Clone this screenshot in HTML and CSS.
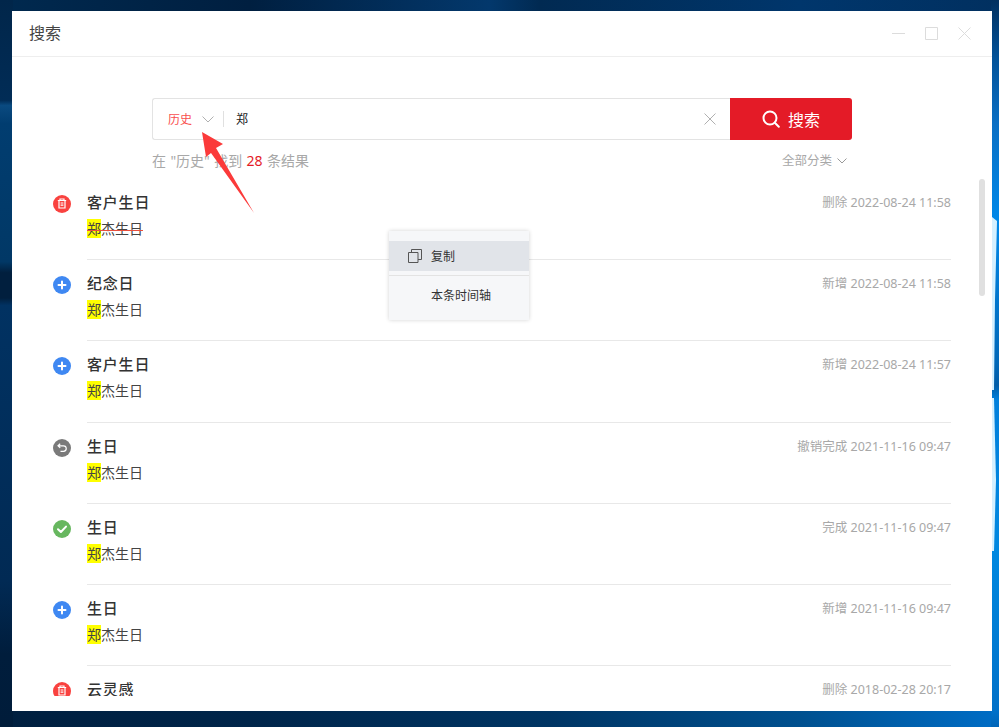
FILE: index.html
```html
<!DOCTYPE html>
<html lang="zh-CN">
<head>
<meta charset="utf-8">
<title>搜索</title>
<link rel="stylesheet" href="styles.css">
</head>
<body>
<svg class="wallpaper" width="999" height="727" viewBox="0 0 999 727" aria-hidden="true">
  <defs>
    <linearGradient id="gTop"><stop offset="0" stop-color="#00294f"/><stop offset=".25" stop-color="#001f40"/><stop offset=".49" stop-color="#03386c"/><stop offset=".54" stop-color="#012a52"/><stop offset=".8" stop-color="#00366c"/><stop offset="1" stop-color="#013060"/></linearGradient>
    <linearGradient id="gBottom"><stop offset="0" stop-color="#001f3f"/><stop offset=".25" stop-color="#00254a"/><stop offset=".55" stop-color="#003564"/><stop offset=".8" stop-color="#00508f"/><stop offset="1" stop-color="#006dc6"/></linearGradient>
    <linearGradient id="gLeft" x2="0" y2="1"><stop offset="0" stop-color="#01264a"/><stop offset=".138" stop-color="#012c56"/><stop offset=".145" stop-color="#0a4a80"/><stop offset=".17" stop-color="#013d70"/><stop offset=".36" stop-color="#013866"/><stop offset=".375" stop-color="#011f3e"/><stop offset=".41" stop-color="#011f3e"/><stop offset=".42" stop-color="#013262"/><stop offset=".8" stop-color="#012a54"/><stop offset=".9" stop-color="#001d3c"/><stop offset="1" stop-color="#001c3a"/></linearGradient>
    <linearGradient id="gRight" x2="0" y2="1"><stop offset="0" stop-color="#01305f"/><stop offset=".08" stop-color="#025299"/><stop offset=".17" stop-color="#0a6fc4"/><stop offset=".3" stop-color="#0088e8"/><stop offset=".5" stop-color="#0068b8"/><stop offset=".53" stop-color="#005da8"/><stop offset=".55" stop-color="#0080dc"/><stop offset=".76" stop-color="#0088e0"/><stop offset=".98" stop-color="#0070c8"/><stop offset="1" stop-color="#0065b8"/></linearGradient>
  </defs>
  <rect x="0" y="0" width="999" height="12" fill="url(#gTop)"/>
  <rect x="0" y="710" width="999" height="17" fill="url(#gBottom)"/>
  <rect x="0" y="0" width="13" height="727" fill="url(#gLeft)"/>
  <rect x="991" y="0" width="8" height="727" fill="url(#gRight)"/>
  <polygon points="992,217 997,221 995,300 994,390 992,390" fill="#d4f0ff"/>
  <polygon points="992,398 994,398 996,480 994,551 992,551" fill="#d4f0ff"/>
</svg>

<main class="window">
  <header class="titlebar">
    <h1 class="title">搜索</h1>
    <div class="controls">
      <svg class="ctl" width="13" height="13" viewBox="0 0 13 13"><path d="M0 6.500h13"/></svg>
      <svg class="ctl" width="13" height="13" viewBox="0 0 13 13"><path d="M.5.5h12v12H.5z"/></svg>
      <svg class="ctl" width="13" height="13" viewBox="0 0 13 13"><path d="M.5.5l12 12M12.500.5L.5 12.500"/></svg>
    </div>
  </header>

  <section class="search">
    <div class="search-form">
      <div class="field">
        <span class="scope">历史</span>
        <svg class="chev" width="12" height="7" viewBox="0 0 12 7"><path d="M.5.5L6 6 11.500.5"/></svg>
        <span class="sep"></span>
        <span class="query">郑</span>
        <svg class="clear" width="12" height="12" viewBox="0 0 12 12"><path d="M.5.5l11 11M11.500.5l-11 11"/></svg>
      </div>
      <button class="go" type="button">
        <svg width="18" height="18" viewBox="0 0 18 18"><circle cx="8" cy="8" r="6.500"/><path d="M12.800 12.800L16.800 16.800"/></svg>
        <span>搜索</span>
      </button>
    </div>
    <div class="summary">
      <span class="found">在 "历史" 找到 <em class="count">28</em> 条结果</span>
      <span class="filter">全部分类
        <svg width="10" height="6" viewBox="0 0 10 6"><path d="M.5.500L5 5 9.500.5"/></svg>
      </span>
    </div>
  </section>

  <section class="list">
    <article class="row">
      <svg class="badge" width="18" height="18" viewBox="0 0 18 18"><circle cx="9" cy="9" r="9" fill="#f9423f"/><path class="glyph thin" d="M4.800 5.500h8.400M7 5.300V4h4v1.300M6 5.800v7.200h6V5.800"/><path class="glyph thin" d="M7.600 8h2.800M7.600 10.200h2.800"/></svg>
      <div class="body">
        <div class="head"><h2 class="name">客户生日</h2><span class="meta">删除 2022-08-24 11:58</span></div>
        <p class="text struck"><mark class="hit">郑</mark>杰生日</p>
      </div>
    </article>
    <article class="row">
      <svg class="badge" width="18" height="18" viewBox="0 0 18 18"><circle cx="9" cy="9" r="9" fill="#3f88f2"/><path class="glyph" d="M9 5.500v7M5.500 9h7"/></svg>
      <div class="body">
        <div class="head"><h2 class="name">纪念日</h2><span class="meta">新增 2022-08-24 11:58</span></div>
        <p class="text"><mark class="hit">郑</mark>杰生日</p>
      </div>
    </article>
    <article class="row">
      <svg class="badge" width="18" height="18" viewBox="0 0 18 18"><circle cx="9" cy="9" r="9" fill="#3f88f2"/><path class="glyph" d="M9 5.500v7M5.500 9h7"/></svg>
      <div class="body">
        <div class="head"><h2 class="name">客户生日</h2><span class="meta">新增 2022-08-24 11:57</span></div>
        <p class="text"><mark class="hit">郑</mark>杰生日</p>
      </div>
    </article>
    <article class="row">
      <svg class="badge" width="18" height="18" viewBox="0 0 18 18"><circle cx="9" cy="9" r="9" fill="#7a7a7a"/><path class="glyph thin" d="M7.200 4.700L5 6.800l2.200 2.100M5.200 6.800h5.300a2.700 2.700 0 0 1 0 5.500H7.500"/></svg>
      <div class="body">
        <div class="head"><h2 class="name">生日</h2><span class="meta">撤销完成 2021-11-16 09:47</span></div>
        <p class="text"><mark class="hit">郑</mark>杰生日</p>
      </div>
    </article>
    <article class="row">
      <svg class="badge" width="18" height="18" viewBox="0 0 18 18"><circle cx="9" cy="9" r="9" fill="#67b75f"/><path class="glyph" d="M5 9.200l2.900 2.800L13 6.600"/></svg>
      <div class="body">
        <div class="head"><h2 class="name">生日</h2><span class="meta">完成 2021-11-16 09:47</span></div>
        <p class="text"><mark class="hit">郑</mark>杰生日</p>
      </div>
    </article>
    <article class="row">
      <svg class="badge" width="18" height="18" viewBox="0 0 18 18"><circle cx="9" cy="9" r="9" fill="#3f88f2"/><path class="glyph" d="M9 5.500v7M5.500 9h7"/></svg>
      <div class="body">
        <div class="head"><h2 class="name">生日</h2><span class="meta">新增 2021-11-16 09:47</span></div>
        <p class="text"><mark class="hit">郑</mark>杰生日</p>
      </div>
    </article>
    <article class="row">
      <svg class="badge" width="18" height="18" viewBox="0 0 18 18"><circle cx="9" cy="9" r="9" fill="#f9423f"/><path class="glyph thin" d="M4.800 5.500h8.400M7 5.300V4h4v1.300M6 5.800v7.200h6V5.800"/><path class="glyph thin" d="M7.600 8h2.800M7.600 10.200h2.800"/></svg>
      <div class="body">
        <div class="head"><h2 class="name">云灵感</h2><span class="meta">删除 2018-02-28 20:17</span></div>
      </div>
    </article>
  </section>

  <div class="scrollbar"></div>

  <nav class="menu">
    <div class="menu-item active">
      <svg class="menu-icon" width="14" height="14" viewBox="0 0 14 14"><path d="M.5 3.500h9.500v10H.5zM3.500 3.500V.5h10v10H10"/></svg>
      <span>复制</span>
    </div>
    <div class="menu-rule"></div>
    <div class="menu-item"><span>本条时间轴</span></div>
  </nav>

  <svg class="arrow" width="60" height="90" viewBox="0 0 60 90" aria-hidden="true"><polygon points="2,2 23,14 16,18 54,83 11,23 6,27"/></svg>
</main>
</body>
</html>
```

FILE: styles.css
```css
* { box-sizing: border-box; }
html, body { margin: 0; height: 100%; }
body {
  position: relative;
  width: 999px;
  height: 727px;
  padding: 11px 7px 16px 12px;
  overflow: hidden;
  background: #01305f;
  font-family: "Noto Sans", "Noto Sans CJK SC", sans-serif;
  color: #333;
}
.wallpaper { position: absolute; left: 0; top: 0; }

.window {
  position: relative;
  display: flex;
  flex-direction: column;
  width: 980px;
  height: 700px;
  background: #fff;
}

.titlebar {
  display: flex;
  flex: none;
  align-items: center;
  justify-content: space-between;
  height: 46px;
  padding: 0 21px 4px 17px;
  border-bottom: 1px solid #eeeeee;
}
.title { margin: 0; font-size: 16px; font-weight: 400; color: #444; }
.controls { display: flex; gap: 20px; margin-top: 4px; }
.ctl { fill: none; stroke: #dcdcdc; stroke-width: 1; }

.search { flex: none; padding: 41px 140px 0; }
.search-form { display: flex; height: 42px; }
.field {
  display: flex;
  flex: 1;
  align-items: center;
  padding: 0 14px 0 15px;
  border: 1px solid #e3e3e3;
  border-right: 0;
  border-radius: 3px 0 0 3px;
  font-size: 12px;
}
.scope { color: #f9504f; }
.chev { margin-left: 10px; fill: none; stroke: #b0b0b0; }
.sep { width: 1px; height: 16px; margin-left: 9px; background: #e0e0e0; }
.query { flex: 1; margin-left: 12px; color: #222; }
.clear { fill: none; stroke: #b0b0b0; }
.go {
  display: flex;
  align-items: center;
  justify-content: center;
  gap: 8px;
  width: 122px;
  padding: 0;
  border: 0;
  border-radius: 0 3px 3px 0;
  background: #e41b27;
  color: #fff;
  font: inherit;
  font-size: 16px;
}
.go svg { fill: none; stroke: #fff; stroke-width: 2; stroke-linecap: round; }

.summary {
  display: flex;
  align-items: center;
  justify-content: space-between;
  height: 20px;
  margin-top: 11px;
  padding-right: 5px;
  font-size: 14px;
  line-height: 20px;
  color: #a8a8a8;
}
.found { word-spacing: .75px; }
.count { font-style: normal; color: #e41b27; }
.filter { display: flex; align-items: center; gap: 5px; font-size: 12.500px; }
.filter svg { fill: none; stroke: #999; }

.list {
  flex: none;
  height: 517px;
  margin-top: 8px;
  padding: 0 41px;
  overflow: hidden;
}
.row { display: flex; gap: 16px; height: 81.2px; }
.badge { flex: none; margin-top: 16px; }
.glyph { fill: none; stroke: #fff; stroke-width: 2; stroke-linecap: round; stroke-linejoin: round; }
.glyph.thin { stroke-width: 1.200; stroke-linecap: butt; stroke-linejoin: miter; }
.body { flex: 1; min-width: 0; padding-top: 12px; border-bottom: 1px solid #e8e8e8; }
.head { display: flex; align-items: center; justify-content: space-between; height: 21px; }
.name { margin: 0; font-size: 15px; font-weight: 500; letter-spacing: .8px; color: #333; }
.meta { font-size: 12.500px; color: #a8a8a8; }
.text { margin: 7px 0 0; font-size: 14px; line-height: 20px; color: #444; }
.struck { position: relative; width: fit-content; }
.struck::after {
  content: "";
  position: absolute;
  left: 0;
  right: 0;
  top: 11px;
  height: 1px;
  background: #e8503e;
}
.hit { background: #ffff00; color: inherit; }

.scrollbar {
  position: absolute;
  left: 967px;
  top: 168px;
  width: 6px;
  height: 117px;
  border-radius: 3px;
  background: #e0e0e0;
}

.menu {
  position: absolute;
  left: 377px;
  top: 220px;
  width: 140px;
  height: 89px;
  padding-top: 10px;
  background: #f6f7f9;
  box-shadow: 0 0 4px rgba(0, 0, 0, .18);
  font-size: 12px;
  color: #333;
}
.menu-item {
  display: flex;
  align-items: center;
  height: 30px;
  padding-left: 42px;
}
.menu-item.active { position: relative; background: #e1e4e9; }
.menu-icon { position: absolute; left: 19px; top: 8px; fill: none; stroke: #555; }
.menu-rule { height: 1px; margin: 4px 0; background: #e3e3e3; }

.arrow { position: absolute; left: 188px; top: 119px; overflow: visible; }
.arrow polygon { fill: #fb3a3a; }
```
